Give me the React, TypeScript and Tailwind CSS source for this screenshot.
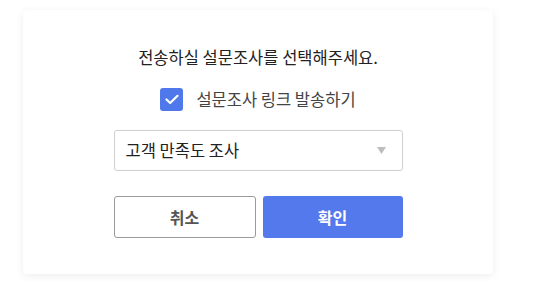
import { useState } from "react";

const FONT = { fontFamily: '"Noto Sans CJK KR", "Noto Sans", sans-serif' };

export default function App() {
  const [sendLink, setSendLink] = useState(true);
  const [survey, setSurvey] = useState("고객 만족도 조사");

  return (
    <div className="min-h-screen bg-white pl-[23px] pt-[10px]" style={FONT}>
      <div className="flex h-[264px] w-[470px] flex-col items-center rounded-[4px] bg-white pt-[35px] shadow-[0_2px_8px_rgba(0,0,0,0.07)]">
        <p className="text-[16.5px] leading-[24px] text-[#222]">
          전송하실 설문조사를 선택해주세요.
        </p>

        <label className="mt-[18px] flex cursor-pointer items-center gap-[13px]">
          <span
            className="flex h-[23px] w-[23px] items-center justify-center rounded-[3px] bg-[#4f78eb]"
            onClick={() => setSendLink(!sendLink)}
          >
            {sendLink && (
              <svg width="14" height="11" viewBox="0 0 14 11" fill="none">
                <path
                  d="M1.5 5.5 L5.2 9 L12.5 1.8"
                  stroke="white"
                  strokeWidth="2.2"
                  strokeLinecap="round"
                  strokeLinejoin="round"
                />
              </svg>
            )}
          </span>
          <span className="text-[16.5px] leading-[24px] text-[#444]">설문조사 링크 발송하기</span>
        </label>

        <div className="relative mt-[19px] w-[289px]">
          <select
            value={survey}
            onChange={(e) => setSurvey(e.target.value)}
            className="h-[41px] w-full appearance-none rounded-[3px] border border-[#cfcfcf] bg-white pl-[11px] text-[16.5px] text-[#222] outline-none"
            style={FONT}
          >
            <option>고객 만족도 조사</option>
            <option>서비스 이용 조사</option>
          </select>
          <svg
            className="pointer-events-none absolute right-[17px] top-[17px]"
            width="9"
            height="7"
            viewBox="0 0 9 7"
          >
            <path d="M0 0 H9 L4.5 7 Z" fill="#bdbdbd" />
          </svg>
        </div>

        <div className="mt-[25px] flex w-[289px] gap-[7px]">
          <button className="h-[42px] flex-1 rounded-[3px] border border-[#9a9a9a] bg-white text-[16px] font-bold text-[#555]">
            취소
          </button>
          <button className="h-[42px] flex-1 rounded-[3px] bg-[#5479ec] text-[16px] font-bold text-white">
            확인
          </button>
        </div>
      </div>
    </div>
  );
}
